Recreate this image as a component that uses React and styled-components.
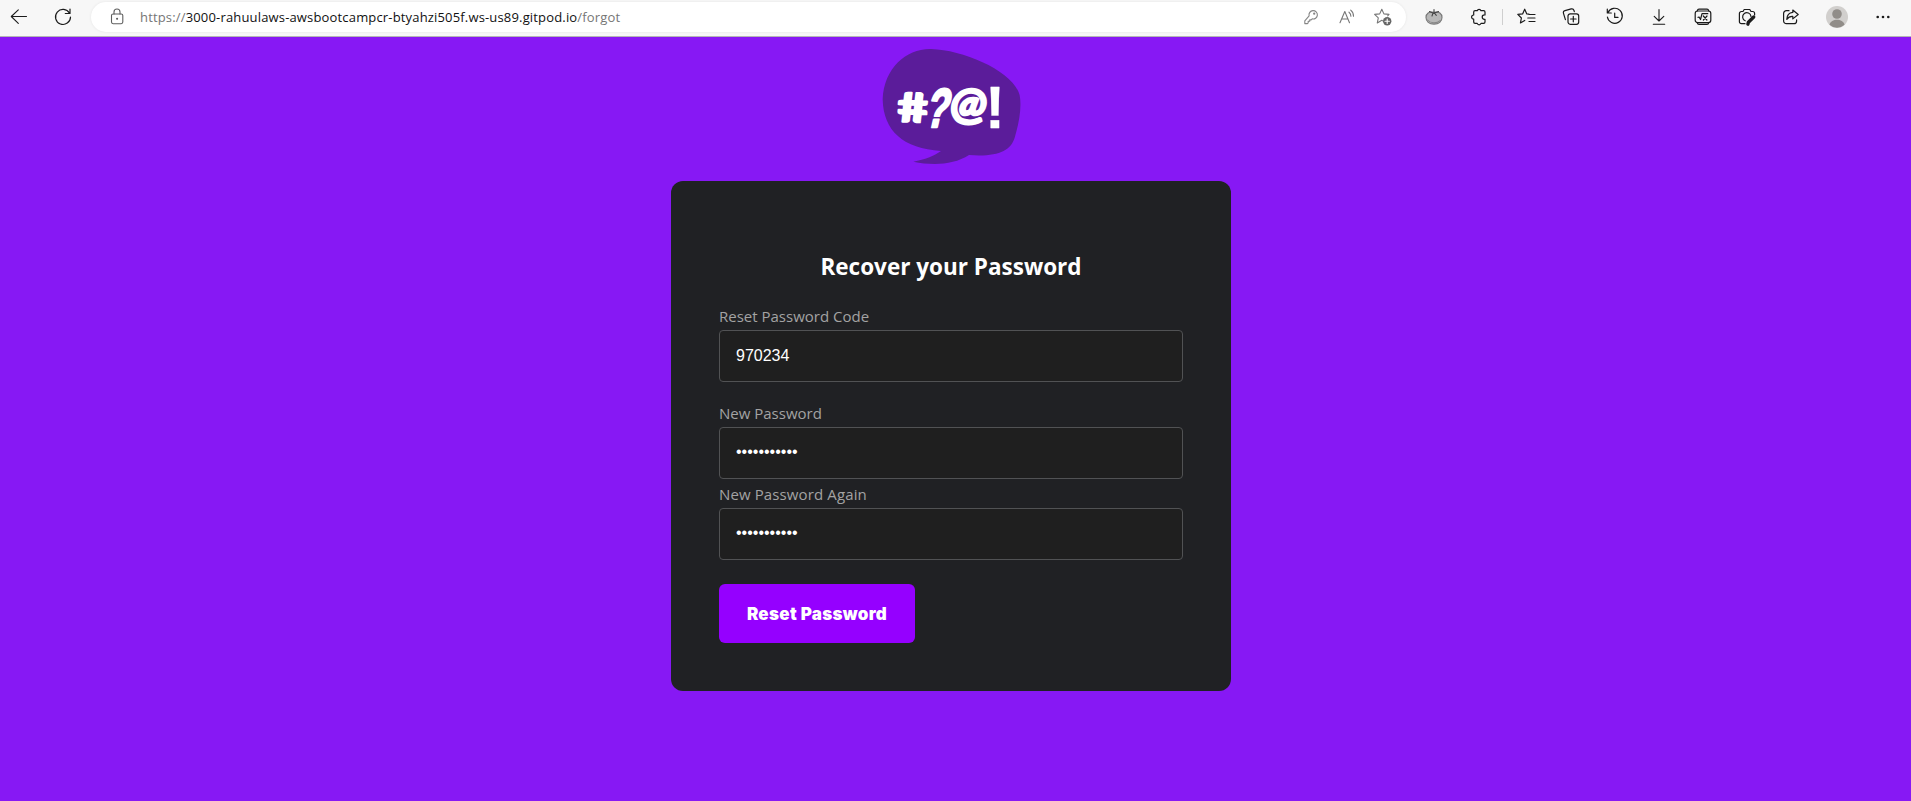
import React from "react";
import styled, { createGlobalStyle } from "styled-components";

const Global = createGlobalStyle`
  *, *::before, *::after { box-sizing: border-box; }
  body { margin: 0; background: #8718f4; overflow: hidden; }
`;

const Window = styled.div`
  display: flex;
  flex-direction: column;
  height: 100vh;
  background: #8718f4;
  font-family: "Open Sans", "Noto Sans", sans-serif;
`;

const Toolbar = styled.header`
  display: flex;
  align-items: center;
  flex: none;
  height: 37px;
  padding: 0 6px 2px 9px;
  background: #f7f7f7;
  border-bottom: 1px solid #b5b5b5;
`;

const NavButtons = styled.nav`
  display: flex;
  flex: none;
  gap: 24px;
  width: 82px;
`;

const AddressBar = styled.div`
  display: flex;
  flex: none;
  align-items: center;
  width: 1315px;
  height: 30px;
  padding: 0 13px 0 16px;
  border-radius: 15px;
  background: #fff;
  box-shadow: 0 0 3px rgba(0, 0, 0, 0.08);
`;

const Url = styled.div`
  flex: 1;
  margin-left: 13px;
  font-size: 13px;
  line-height: 20px;
  letter-spacing: 0.165px;
  white-space: nowrap;
  color: #111;
`;

const Muted = styled.span`
  color: #767676;
`;

const AddressActions = styled.div`
  display: flex;
  gap: 16px;
`;

const Slot = styled.div`
  display: flex;
  flex: none;
  justify-content: center;
  width: ${(p) => p.$w || 44}px;
`;

const Tools = styled.div`
  display: flex;
  align-items: center;
  margin-left: 6px;
`;

const Divider = styled.i`
  width: 1px;
  height: 16px;
  margin: 0 2px 0 1px;
  background: #cfcfcf;
`;

const Glyph = styled.svg`
  display: block;
  flex: none;
  overflow: visible;
  fill: none;
  stroke: ${(p) => p.$tone || "#1b1b1b"};
  stroke-width: ${(p) => p.$weight || 1.1};
  stroke-linecap: round;
  stroke-linejoin: round;
`;

const Icon = ({ size = 20, tone, weight, children }) => (
  <Glyph width={size} height={size} viewBox={`0 0 ${size} ${size}`} $tone={tone} $weight={weight}>
    {children}
  </Glyph>
);

const Page = styled.main`
  display: flex;
  flex-direction: column;
  align-items: center;
  padding: 11px 9px 0 0;
`;

const LogoArt = styled.svg`
  display: block;
  margin-bottom: 16px;
`;

const LogoMark = styled.text`
  font-family: ${(p) => p.$face}, sans-serif;
  font-weight: ${(p) => p.$heft || 700};
  font-size: ${(p) => p.$size}px;
  fill: #fff;
  stroke: #fff;
  stroke-width: ${(p) => p.$edge}px;
  stroke-linejoin: round;
`;

const Card = styled.form`
  display: flex;
  flex-direction: column;
  width: 560px;
  height: 510px;
  padding: 68px 48px 48px;
  border-radius: 12px;
  background: #202124;
`;

const Title = styled.h2`
  margin: 0 0 19px;
  color: #fff;
  font: 700 22.5px/36px "Open Sans", "Noto Sans", sans-serif;
  text-align: center;
  white-space: nowrap;
`;

const Field = styled.label`
  display: flex;
  flex-direction: column;
  margin-bottom: ${(p) => p.$gap}px;
`;

const FieldName = styled.span`
  height: 26px;
  color: #a3a3a3;
  font-size: 15px;
  line-height: 25px;
  letter-spacing: ${(p) => p.$track || 0}px;
`;

const Input = styled.input`
  width: 100%;
  height: 52px;
  padding: 0 16px;
  border: 1px solid #515254;
  border-radius: 4px;
  outline: none;
  background: #1f1f1f;
  color: #fff;
  font: 16px "Liberation Sans", Arial, sans-serif;

  &[type="password"] {
    padding-bottom: 2px;
  }
`;

const Submit = styled.button`
  flex: none;
  width: 196px;
  height: 59px;
  padding: 0;
  border: 0;
  border-radius: 6px;
  background: #9500ff;
  color: #fff;
  font: 900 17px Inter, "Liberation Sans", sans-serif;
  letter-spacing: 0.3px;
  white-space: nowrap;
`;

function Logo() {
  return (
    <LogoArt width="139" height="117" viewBox="36 36 417 351">
      <path
        fill="#5b1c9a"
        d="M183 39C285 42 432 108 449 178C455 210 449 255 434 305C422 345 382 363 297 357C250 388 185 388 130 377C165 371 192 360 213 345C100 338 40 285 38 190C42 95 110 37 183 39Z"
      />
      <LogoMark $face="Lato" $heft={900} $size={122} $edge={5} transform="translate(87 257) rotate(2) skewX(9) scale(1.32 1)">#</LogoMark>
      <LogoMark $face="'Liberation Sans'" $size={164} $edge={8} transform="translate(163 273) skewX(-13) scale(.66 1)">?</LogoMark>
      <LogoMark $face="Lato" $size={130} $edge={8} transform="translate(237 250) skewX(-6)">@</LogoMark>
      <LogoMark $face="'Liberation Sans'" $size={176} $edge={1} transform="translate(346 276)">!</LogoMark>
    </LogoArt>
  );
}

export default function App() {
  return (
    <Window>
      <Global />
      <Toolbar>
        <NavButtons>
          <Icon><path d="M17.5 9.5H2.5M9.3 2.8L2.3 9.5l7 6.8" /></Icon>
          <Icon weight={1.2}><path d="M16.5 6.2A7.5 7.5 0 1 0 17.5 10M17 2v4.5h-4.7" /></Icon>
        </NavButtons>
        <AddressBar>
          <Icon tone="#5f5f5f"><rect x="4.5" y="7" width="11.3" height="9.7" rx="1.6" /><path d="M7 7V5a3 3 0 0 1 6 0v2" /><circle cx="10.1" cy="11.8" r=".5" fill="#5f5f5f" /></Icon>
          <Url><Muted>https://</Muted>3000-rahuulaws-awsbootcampcr-btyahzi505f.ws-us89.gitpod.io<Muted>/forgot</Muted></Url>
          <AddressActions>
            <Icon tone="#858585"><path d="M8.1 8.8a4.2 4.2 0 1 1 3.1 3.1l-1 1H8.7v1.4H7.2v1.5l-.8.8H3.8v-2.8z" /><circle cx="13.2" cy="6.7" r=".6" /></Icon>
            <Icon tone="#777"><path d="M3 15.7L7.8 4.5l4.7 11.2M4.6 12h6.3M12 5.2c1.3 1 1.9 2.4 1.9 4.1M13.7 3.1c1.9 1.5 2.8 3.5 2.8 6.2" /></Icon>
            <Icon tone="#777"><path d="M9.8 13.9l-1-.6-4.5 2.6 1-5L1.6 7.4l5.1-.5 2.1-4.7 2.1 4.7 5.1.5-1.3 1.4" /><circle cx="14.2" cy="14.2" r="4.2" fill="#666" stroke="none" /><path stroke="#fff" d="M14.2 12v4.4M12 14.2h4.4" /></Icon>
          </AddressActions>
        </AddressBar>
        <Tools>
          <Slot><Icon><path d="M10 5.2c5-1 8 1.2 8 5.2s-3.2 6.7-8 6.7-8-2.7-8-6.7 3-6.2 8-5.2z" fill="#b7b7b7" stroke="#777" /><path d="M3.5 13c3 3.5 9 4 13 .3" stroke="#888" /><path d="M10 2.5v4M5.5 4.5L9 6l-1 3M14.5 4.5L10.5 6l1.8 2.3" stroke="#444" /></Icon></Slot>
          <Slot $w={45}><Icon weight={1.2}><path d="M6.1 3.7H8.2a2 2 0 0 1 3.8 0H14.6Q16 3.7 16 5.1V7.9h-.6a2.2 2.2 0 0 0 0 4.4H16V15q0 1.4-1.4 1.4H12a2 2 0 0 1-3.8 0H6.1q-1.4 0-1.4-1.4V12.2a2.1 2.1 0 0 1 0-4.2V5.1q0-1.4 1.4-1.4z" /></Icon></Slot>
          <Divider />
          <Slot><Icon weight={1.2}><path d="M12 7.1l-2.2-.2-2.1-4.7-2.1 4.7-4.8.5L4.4 11l-1 5 4.3-2.6M12 7.5h6M10.8 11H18M12 14.5h6" /></Icon></Slot>
          <Slot><Icon weight={1.2}><rect x="7" y="6.8" width="10.7" height="10.5" rx="2.2" /><path d="M12.3 9.3v5.5M9.6 12h5.5M4.4 12.6L2.5 6.4Q1.8 4.2 4 3.6l6.2-1.7q2.2-.5 2.8 1.6l.3 1.1" /></Icon></Slot>
          <Slot><Icon weight={1.2}><path d="M3 5.6A7.5 7.5 0 1 1 2.4 10M2.3 2v4h4M9.7 6.2v4.2H13" /></Icon></Slot>
          <Slot><Icon><path d="M10 2.5v11.3M5.2 9.3L10 14l4.8-4.7M4.3 17.3h11.4" /></Icon></Slot>
          <Slot><Icon weight={1.2}><rect x="2.2" y="4" width="15.6" height="11.6" rx="2.4" /><path d="M4.3 3.8Q4.6 2.2 6 2.2h8q1.4 0 1.7 1.6M4.3 15.8q.3 1.5 1.7 1.5h8q1.4 0 1.7-1.5" /><path d="M5 10.3l1.1-.3 1.4 2.5L9 6.7h5.8M10.3 9l3.6 4M14 9l-3.6 4" /></Icon></Slot>
          <Slot><Icon weight={1.2}><path d="M8 16.7H4.4a2 2 0 0 1-2-2V6.5a2 2 0 0 1 2-2H6l1.2-2h5.6l1.2 2h1.6a2 2 0 0 1 2 2V8" /><path d="M8.2 13.8a4.2 4.2 0 1 1 5.8-4.4" /><path d="M16.7 10l-5.3 5.2-.5 2" strokeWidth="3.4" /></Icon></Slot>
          <Slot><Icon weight={1.2}><path d="M8 3.7H5.4a2.8 2.8 0 0 0-2.8 2.8v7.4a2.8 2.8 0 0 0 2.8 2.8h7.4a2.8 2.8 0 0 0 2.8-2.8v-1.1" /><path d="M11.8 3l5.4 4.5-5.4 4.4V9.4q-3.8-.3-6 3 .3-6.5 6-7z" /></Icon></Slot>
          <Slot $w={48}><Icon size={22}><circle cx="11" cy="11" r="11" fill="#d1cfcd" stroke="none" /><circle cx="11" cy="8" r="4.8" fill="#918d89" stroke="none" /><path d="M3.5 18.8c1.4-6.7 13.6-6.7 15 0a11 11 0 0 1-15 0z" fill="#918d89" stroke="none" /></Icon></Slot>
          <Slot><Icon><g fill="#1b1b1b" stroke="none"><circle cx="4.7" cy="10" r="1.3" /><circle cx="10" cy="10" r="1.3" /><circle cx="15.3" cy="10" r="1.3" /></g></Icon></Slot>
        </Tools>
      </Toolbar>
      <Page>
        <Logo />
        <Card>
          <Title>Recover your Password</Title>
          <Field $gap={19}><FieldName>Reset Password Code</FieldName><Input readOnly defaultValue="970234" /></Field>
          <Field $gap={3}><FieldName>New Password</FieldName><Input readOnly type="password" defaultValue="Testing123!" /></Field>
          <Field $gap={24}><FieldName $track={0.12}>New Password Again</FieldName><Input readOnly type="password" defaultValue="Testing123!" /></Field>
          <Submit type="button">Reset Password</Submit>
        </Card>
      </Page>
    </Window>
  );
}
